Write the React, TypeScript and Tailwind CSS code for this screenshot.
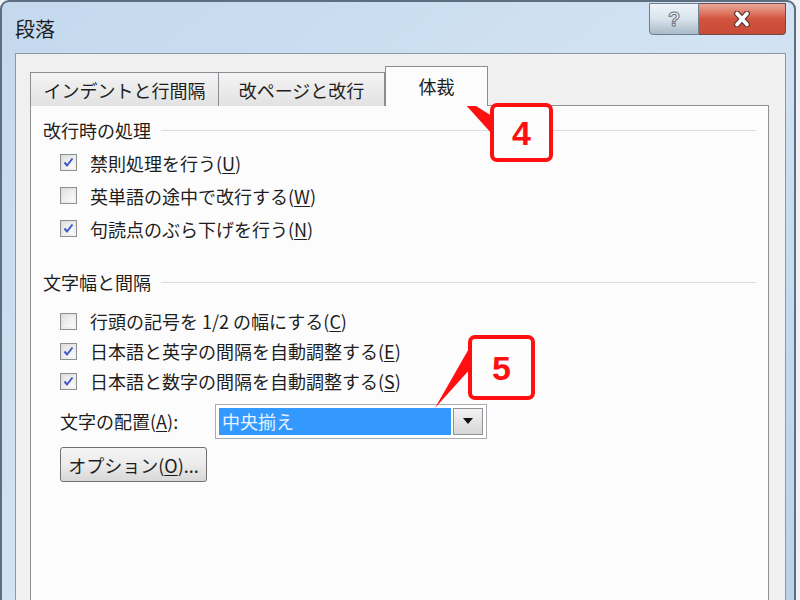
import React from "react";

const font = { fontFamily: '"Noto Sans CJK JP", "Noto Sans", sans-serif' };

// access key, underlined as in Windows dialogs
function Key({ k }: { k: string }) {
  return (
    <span>
      (<span className="underline underline-offset-2">{k}</span>)
    </span>
  );
}

function CheckBox({ checked }: { checked: boolean }) {
  return (
    <div className="w-[17px] h-[17px] shrink-0 border border-[#8e8f8f] bg-gradient-to-br from-[#dcdcdc] to-[#f6f6f6] p-[2px]">
      <div className="w-full h-full bg-gradient-to-br from-[#e4e4e4] to-[#fbfbfb] flex items-center justify-center">
        {checked && (
          <svg width="11" height="11" viewBox="0 0 11 11">
            <path d="M1.5 5.5 L4 8.5 L9.5 1.5" fill="none" stroke="#3c59c4" strokeWidth="2" />
          </svg>
        )}
      </div>
    </div>
  );
}

function Row({ checked, children }: { checked: boolean; children: React.ReactNode }) {
  return (
    <div className="flex items-center gap-[13px] pl-[17px]">
      <CheckBox checked={checked} />
      <span className="text-[18px] text-[#1e1e1e] leading-none whitespace-nowrap">{children}</span>
    </div>
  );
}

function SectionHeader({ title }: { title: string }) {
  return (
    <div className="h-[32px] flex items-center gap-[10px]">
      <span className="text-[18px] text-[#1e1e1e] leading-none whitespace-nowrap">{title}</span>
      <div className="flex-1 h-px bg-[#d3dce4]" />
    </div>
  );
}

function Callout({ n, className }: { n: string; className: string }) {
  return (
    <div
      className={`absolute border-[4px] border-[#ff1010] rounded-[7px] bg-[#fdfdfd] flex items-center justify-center text-[#ff1010] text-[34px] font-bold leading-none ${className}`}
      style={{ fontFamily: '"Liberation Sans", Arial, sans-serif' }}
    >
      {n}
    </div>
  );
}

export default function App() {
  return (
    <div className="relative w-[800px] h-[600px] overflow-hidden bg-[#eef2f6]" style={font}>
      <div className="h-[620px] w-[796px] rounded-t-[9px] border-2 border-[#5d6e80] bg-gradient-to-br from-[#c4d9ee] via-[#d2e3f3] to-[#b9d1ea] flex flex-col pl-[13px] pr-[8px]">
        {/* title bar */}
        <div className="h-[51px] shrink-0 flex items-start justify-between">
          <span className="mt-[17px] text-[20px] leading-none text-[#1e1e1e]">段落</span>
          <div className="flex mt-px">
            <div className="w-[50px] h-[32px] border border-[#6f7f90] rounded-bl-[4px] bg-gradient-to-b from-[#eef3f8] via-[#d9e3ec] to-[#a9b9c8] flex items-center justify-center">
              <span
                className="text-[20px] font-bold leading-none text-[#f2f4f6]"
                style={{ fontFamily: '"Liberation Sans", Arial, sans-serif', WebkitTextStroke: "1px #6a737d" }}
              >
                ?
              </span>
            </div>
            <div className="w-[87px] h-[32px] border border-l-0 border-[#6f4a44] rounded-br-[4px] bg-gradient-to-b from-[#e9a899] via-[#d2543e] to-[#c94a38] flex items-center justify-center">
              <svg width="22" height="16" viewBox="0 0 22 16">
                <path d="M6 2.5 L16 13.5 M16 2.5 L6 13.5" stroke="#5a3a36" strokeWidth="6" strokeLinecap="round" />
                <path d="M6 2.5 L16 13.5 M16 2.5 L6 13.5" stroke="#ffffff" strokeWidth="3.6" strokeLinecap="round" />
              </svg>
            </div>
          </div>
        </div>

        {/* client area */}
        <div className="flex-1 border border-[#8b98a6] bg-[#f0f0f0] pt-[13px] pl-[14px] pr-[16px] flex flex-col">
          {/* tabs */}
          <div className="flex items-end h-[39px] relative z-10 -mb-px">
            <div className="w-[189px] h-[34px] border border-b-0 border-[#8a8d94] bg-gradient-to-b from-[#f4f4f4] to-[#e2e2e2] flex items-center justify-center text-[18px] text-[#1e1e1e] leading-none">
              インデントと行間隔
            </div>
            <div className="w-[166px] h-[34px] border border-l-0 border-b-0 border-[#8a8d94] bg-gradient-to-b from-[#f4f4f4] to-[#e2e2e2] flex items-center justify-center text-[18px] text-[#1e1e1e] leading-none">
              改ページと改行
            </div>
            <div className="w-[103px] h-[40px] border border-b-0 border-[#8a8d94] bg-[#fcfcfc] flex items-start justify-center pt-[10px] text-[18px] text-[#1e1e1e] leading-none">
              体裁
            </div>
          </div>

          {/* tab panel */}
          <div className="flex-1 border border-[#8e9093] bg-[#fcfcfc] pl-[12px] pr-[12px] pt-[8px] flex flex-col">
            <SectionHeader title="改行時の処理" />
            <div className="flex flex-col">
              <div className="h-[33px] flex items-center">
                <Row checked>
                  禁則処理を行う<Key k="U" />
                </Row>
              </div>
              <div className="h-[33px] flex items-center">
                <Row checked={false}>
                  英単語の途中で改行する<Key k="W" />
                </Row>
              </div>
              <div className="h-[33px] flex items-center">
                <Row checked>
                  句読点のぶら下げを行う<Key k="N" />
                </Row>
              </div>
            </div>

            <div className="mt-[21px]">
              <SectionHeader title="文字幅と間隔" />
            </div>
            <div className="flex flex-col mt-[8px]">
              <div className="h-[30px] flex items-center">
                <Row checked={false}>
                  行頭の記号を 1/2 の幅にする<Key k="C" />
                </Row>
              </div>
              <div className="h-[30px] flex items-center">
                <Row checked>
                  日本語と英字の間隔を自動調整する<Key k="E" />
                </Row>
              </div>
              <div className="h-[30px] flex items-center">
                <Row checked>
                  日本語と数字の間隔を自動調整する<Key k="S" />
                </Row>
              </div>
            </div>

            {/* alignment select */}
            <div className="mt-[7px] h-[36px] flex items-center pl-[17px]">
              <span className="w-[155px] text-[18px] text-[#1e1e1e] leading-none whitespace-nowrap">
                文字の配置<Key k="A" />:
              </span>
              <div className="w-[272px] h-[35px] border border-[#a9abae] bg-white p-[3px] flex items-stretch">
                <div className="flex-1 bg-[#3399ff] flex items-center pl-[3px] text-[18px] text-[#e8f3ff] leading-none">
                  中央揃え
                </div>
                <div className="ml-[2px] w-[30px] border border-[#8f9399] bg-gradient-to-b from-[#f3f3f3] to-[#d6d6d6] flex items-center justify-center">
                  <svg width="10" height="6" viewBox="0 0 10 6">
                    <path d="M0 0 L10 0 L5 6 Z" fill="#101010" />
                  </svg>
                </div>
              </div>
            </div>

            <div className="mt-[8px] pl-[17px]">
              <div className="w-[147px] h-[35px] rounded-[3px] border border-[#707070] bg-gradient-to-b from-[#f4f4f4] via-[#ebebeb] to-[#d8d8d8] flex items-center justify-center text-[18px] text-[#1e1e1e] leading-none">
                オプション<Key k="O" />...
              </div>
            </div>
          </div>
        </div>
      </div>

      {/* annotations */}
      <svg className="absolute inset-0 pointer-events-none" width="800" height="600">
        <polygon points="455,93 492,116 492,134" fill="#ff1010" />
        <polygon points="435,408 471,345 471,368" fill="#ff1010" />
      </svg>
      <Callout n="4" className="left-[490px] top-[103px] w-[63px] h-[59px]" />
      <Callout n="5" className="left-[468px] top-[335px] w-[67px] h-[65px]" />
    </div>
  );
}
